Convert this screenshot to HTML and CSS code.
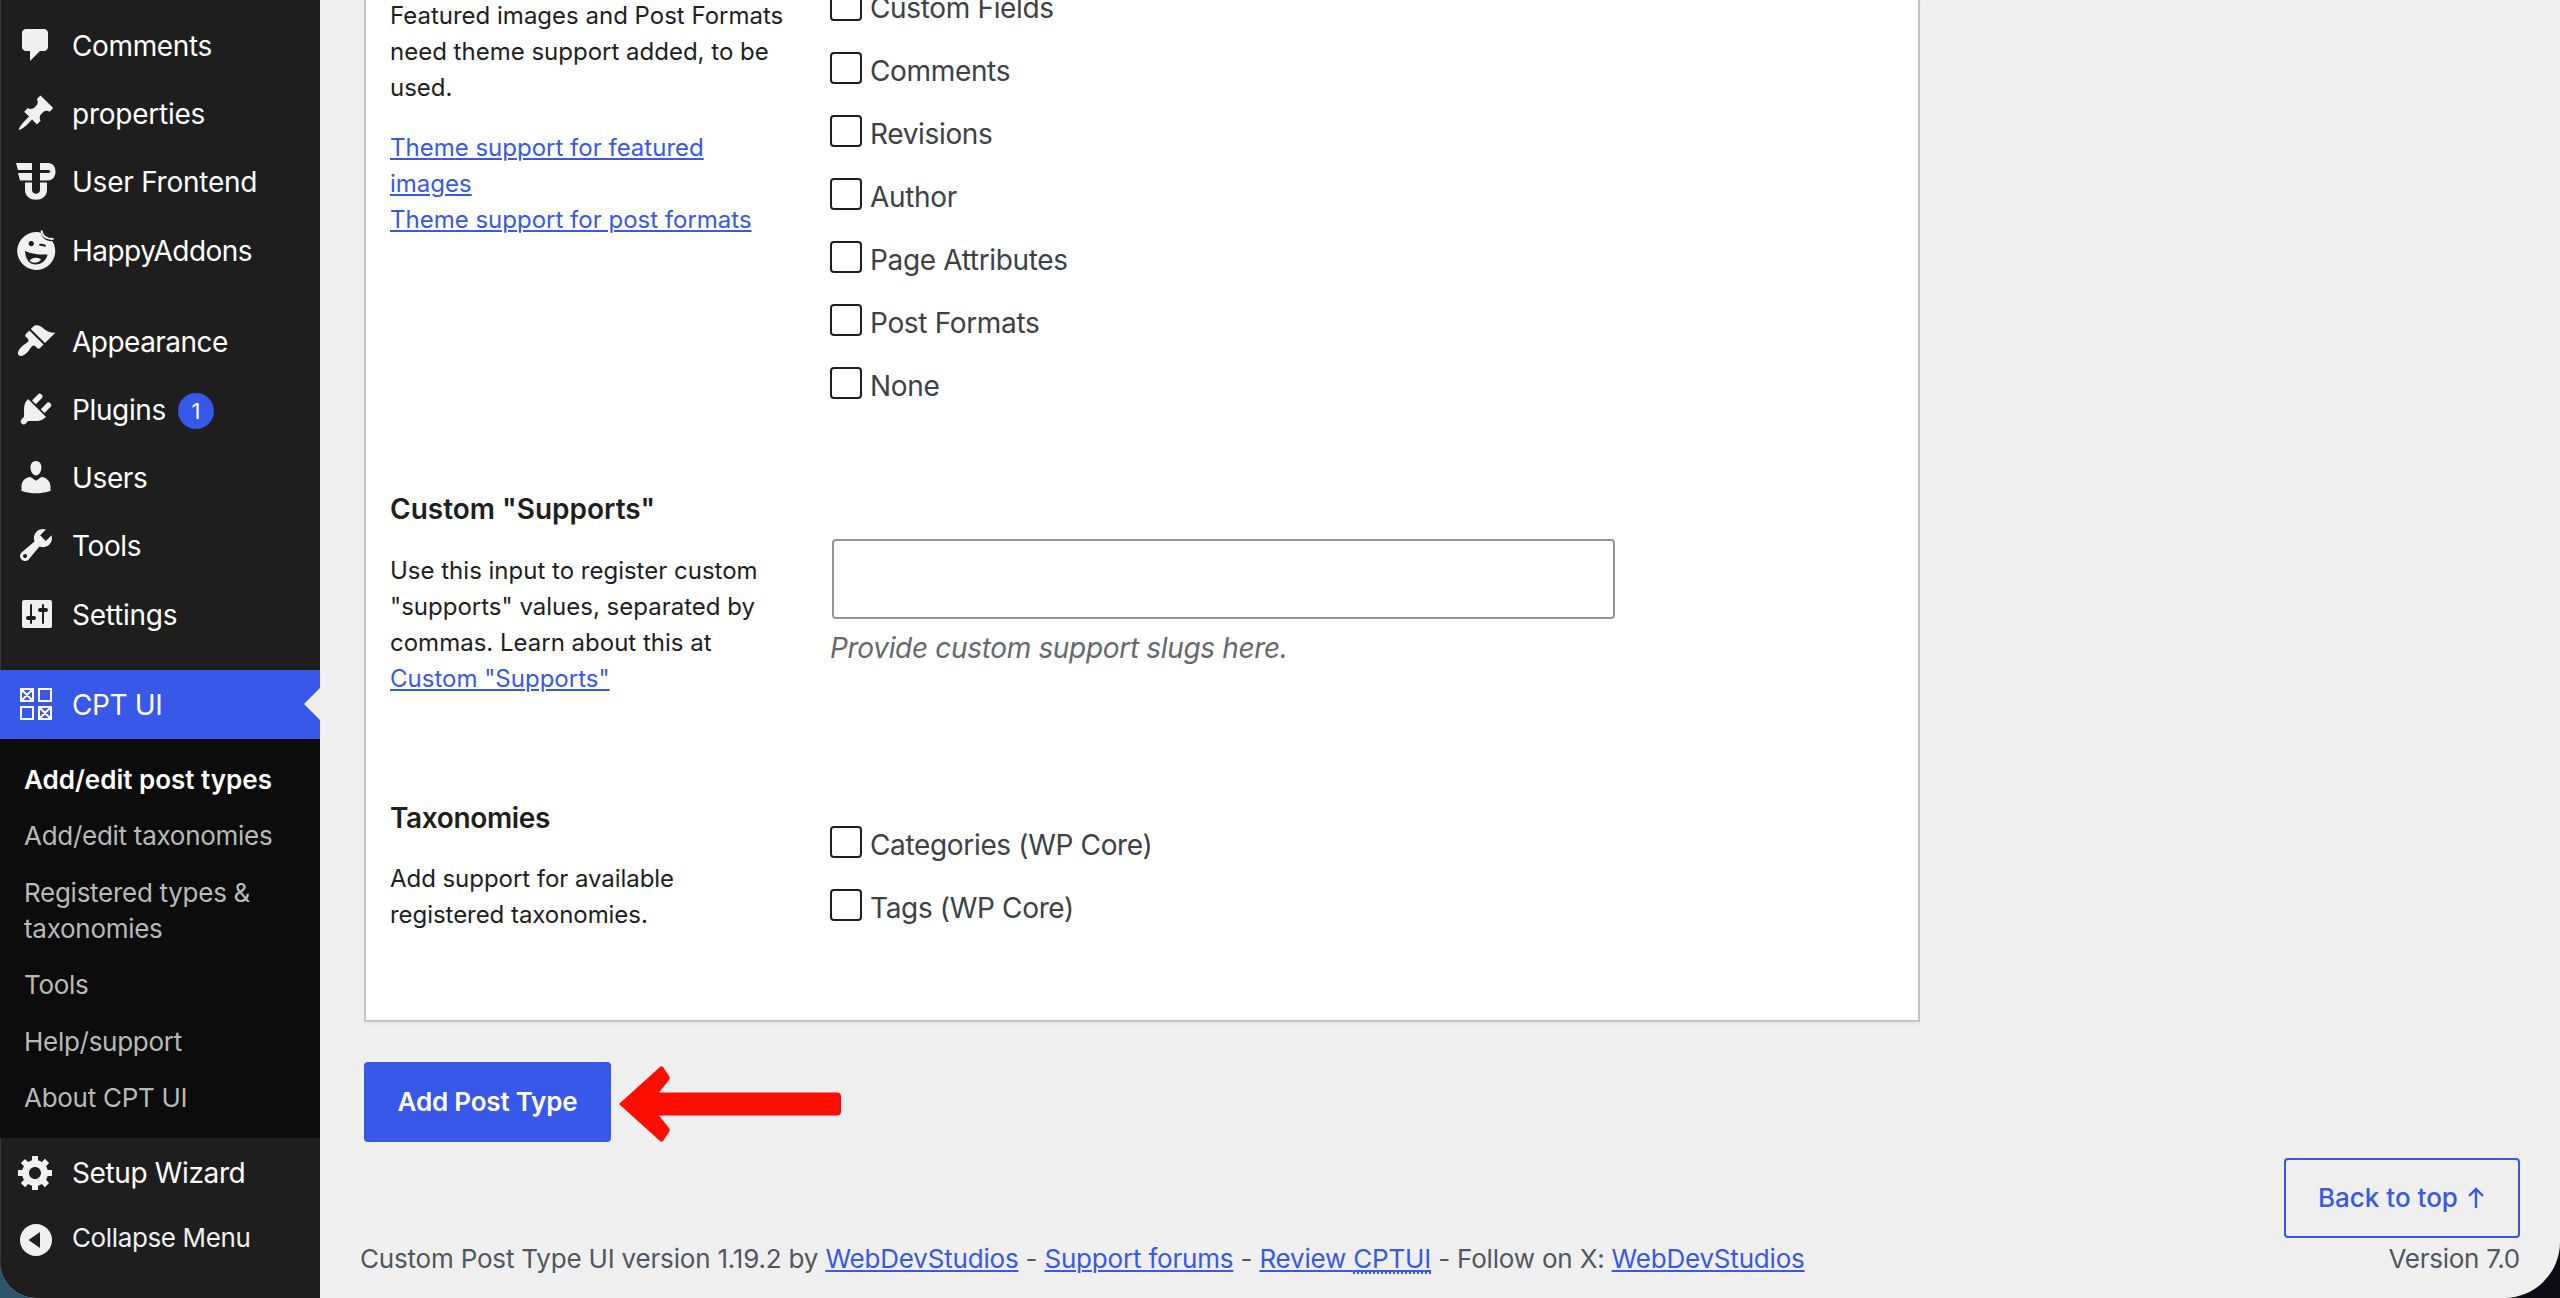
FILE: index.html
```
<!DOCTYPE html>
<html lang="en">
<head>
<meta charset="utf-8">
<title>Add/Edit Post Types</title>
<link rel="stylesheet" href="styles.css">
</head>
<body>
<div class="window">
  <nav class="sidebar">
    <ul class="menu menu-top">
      <li class="item"><svg class="icon" viewBox="0 0 20 20"><path d="M5 2h9c1.1 0 2 .9 2 2v7c0 1.1-.9 2-2 2h-2l-5 5v-5H5c-1.1 0-2-.9-2-2V4c0-1.1.9-2 2-2z"/></svg><span>Comments</span></li>
      <li class="item"><svg class="icon" viewBox="0 0 20 20"><path d="M10.44 3.02l1.82-1.82 6.36 6.35-1.83 1.82c-1.05-.68-2.48-.57-3.41.36l-.75.75c-.92.93-1.04 2.35-.35 3.41l-1.83 1.82-2.41-2.41-2.8 2.79c-.42.42-3.38 2.71-3.8 2.29s1.86-3.39 2.28-3.81l2.79-2.79L4.1 9.36l1.83-1.82c1.05.69 2.48.57 3.4-.36l.75-.75c.93-.92 1.05-2.35.36-3.41z"/></svg><span class="loose">properties</span></li>
      <li class="item"><svg class="icon" viewBox="0 0 40 40"><path d="M0 2h16v7H2zM2 12h14v7.500H4zM24 2h8c5 0 7.500 4 7.500 8.500S37 19.500 32 19.500h-8V12h8.500c2.500 0 2.500-3 0-3H24zM9 21.500h7v7.500c0 5 8 5 8 0v-7.500h7V29c0 13-22 13-22 0z"/></svg><span class="loose">User Frontend</span></li>
      <li class="item"><svg class="icon" viewBox="0 0 40 40"><path fill-rule="evenodd" d="M20 2c2 0 3.500.2 5 .7.500 5 5.500 9 11.500 8.500a19 19 0 1 1-16.500-9.200zM15.200 11a2.600 2.600 0 1 0 .1 0zM23.500 13.800l-.4 1.800 6.600 1.200.3-1.600c-2-1.400-4.500-1.800-6.500-1.400zM9 21c.5 8 4 13.500 10.500 13.500S30.500 30 31.500 24.500C24 25 16 24 9 21z"/><path d="M13.500 30.500c2-3 8-4 11.500-1-1.500 3.500-8.500 4.500-11.500 1z"/><path class="hair" d="M25.500.5c.5 5 4 8.500 12 8.500"/></svg><span class="tight">HappyAddons</span></li>
    </ul>
    <ul class="menu menu-mid">
      <li class="item"><svg class="icon" viewBox="0 0 20 20"><path d="M14.48 11.06L7.41 3.99l1.5-1.5c.5-.56 2.3-.47 3.51.32 1.21.8 1.43 1.28 2.91 2.1 1.18.64 2.45 1.26 4.45.85zm-.71.71L6.7 4.7 4.93 6.47c-.39.39-.39 1.02 0 1.41l1.06 1.06c.39.39.39 1.03 0 1.42-.6.6-1.43 1.11-2.21 1.69-.35.26-.7.53-1.01.84C1.43 14.23.4 16.08 1.4 17.07c.99 1 2.84-.03 4.18-1.36.31-.31.58-.66.85-1.02.57-.78 1.08-1.61 1.69-2.21.39-.39 1.02-.39 1.41 0l1.06 1.06c.39.39 1.02.39 1.41 0z"/></svg><span class="tight">Appearance</span></li>
      <li class="item"><svg class="icon" viewBox="0 0 20 20"><path d="M13.11 4.36L9.87 7.6 8 5.73l3.24-3.24c.35-.34 1.05-.2 1.56.32.52.51.66 1.21.31 1.55zm-8 1.77l.91-1.12 9.01 9.01-1.19.84c-.71.71-2.63 1.16-3.82 1.16H6.14L4.9 17.26c-.59.59-1.54.59-2.12 0-.59-.58-.59-1.53 0-2.12l1.24-1.24v-3.88c0-1.13.4-3.19 1.09-3.89zm7.26 3.97l3.24-3.24c.34-.35 1.04-.21 1.55.31.52.51.66 1.21.31 1.55l-3.24 3.25z"/></svg><span>Plugins</span><b class="badge">1</b></li>
      <li class="item"><svg class="icon" viewBox="0 0 20 20"><path d="M10 9.250c-2.270 0-2.730-3.440-2.730-3.440C7 4.020 7.820 2 9.970 2c2.160 0 2.980 2.020 2.710 3.810 0 0-.41 3.440-2.680 3.440zm0 2.570L12.720 10c2.390 0 4.520 2.330 4.520 4.530v2.490s-3.650 1.130-7.240 1.130c-3.650 0-7.240-1.130-7.240-1.130v-2.490c0-2.250 1.940-4.480 4.470-4.480z"/></svg><span>Users</span></li>
      <li class="item"><svg class="icon" viewBox="0 0 20 20"><path d="M16.68 9.770c-1.340 1.340-3.300 1.670-4.950.99l-5.410 6.520c-.99.99-2.590.99-3.580 0s-.99-2.590 0-3.570l6.520-5.420c-.68-1.650-.35-3.610.99-4.950 1.280-1.280 3.120-1.620 4.720-1.060l-2.890 2.890 2.820 2.820 2.860-2.870c.53 1.580.18 3.390-1.080 4.650zM3.810 16.210c.4.39 1.040.39 1.430 0 .4-.4.4-1.040 0-1.430-.39-.4-1.030-.4-1.430 0-.39.39-.39 1.030 0 1.430z"/></svg><span>Tools</span></li>
      <li class="item"><svg class="icon" viewBox="0 0 20 20"><path fill-rule="evenodd" d="M4 3h13q1 0 1 1v12q0 1-1 1H4q-1 0-1-1V4q0-1 1-1zM7.500 5q-.5 0-.5.5V11H6a1 1 0 0 0 0 2h1v1.500a.5.5 0 0 0 1 0V13h1a1 1 0 0 0 0-2H8V5.500q0-.5-.5-.5zM13.500 5q-.5 0-.5.5V7h-1a1 1 0 0 0 0 2h1v5.500a.5.5 0 0 0 1 0V9h1a1 1 0 0 0 0-2h-1V5.500q0-.5-.5-.5z"/></svg><span class="loose">Settings</span></li>
    </ul>
    <div class="item current"><svg class="icon grid-icon" viewBox="0 0 40 40"><path d="M5 5h12v12H5zM23 5h12v12H23zM5 23h12v12H5zM23 23h12v12H23zM6 6l10 10M16 6L6 16M24 24l10 10M34 24L24 34"/></svg><span>CPT UI</span></div>
    <ul class="submenu">
      <li class="selected">Add/edit post types</li>
      <li>Add/edit taxonomies</li>
      <li>Registered types &amp; taxonomies</li>
      <li>Tools</li>
      <li>Help/support</li>
      <li>About CPT UI</li>
    </ul>
    <ul class="menu">
      <li class="item"><svg class="icon" viewBox="0 0 20 20"><path d="M18 12h-2.180c-.17.7-.44 1.350-.81 1.930l1.540 1.540-2.100 2.100-1.540-1.540c-.58.36-1.230.63-1.910.79V19H8v-2.180c-.68-.16-1.330-.43-1.910-.79l-1.540 1.540-2.120-2.120 1.540-1.540c-.36-.58-.63-1.230-.79-1.910H1V9.030h2.170c.16-.7.44-1.350.8-1.940L2.430 5.550l2.100-2.100 1.540 1.540c.58-.37 1.240-.64 1.930-.81V2h3v2.180c.68.16 1.330.43 1.910.79l1.540-1.540 2.120 2.120-1.540 1.540c.36.59.64 1.240.8 1.940H18V12zm-8.500 1.500c1.660 0 3-1.340 3-3s-1.340-3-3-3-3 1.340-3 3 1.340 3 3 3z"/></svg><span>Setup Wizard</span></li>
      <li class="item collapse"><svg class="icon" viewBox="0 0 40 40"><path fill-rule="evenodd" d="M20 4a16 16 0 1 1 0 32 16 16 0 0 1 0-32zM24 12v16l-11.500-8z"/></svg><span>Collapse Menu</span></li>
    </ul>
  </nav>

  <main class="content">
    <section class="card">
      <div class="row supports">
        <div class="label">
          <p>Featured images and Post Formats need theme support added, to be used.</p>
          <p><a>Theme support for featured images</a><br><a>Theme support for post formats</a></p>
        </div>
        <div class="field checks">
          <label><i class="box"></i>Custom Fields</label>
          <label><i class="box"></i>Comments</label>
          <label><i class="box"></i>Revisions</label>
          <label><i class="box"></i>Author</label>
          <label><i class="box"></i>Page Attributes</label>
          <label><i class="box"></i>Post Formats</label>
          <label><i class="box"></i>None</label>
        </div>
      </div>
      <div class="row custom">
        <div class="label">
          <h3>Custom "Supports"</h3>
          <p>Use this input to register custom "supports" values, separated by commas. Learn about this at <a>Custom "Supports"</a></p>
        </div>
        <div class="field">
          <input class="text-input" type="text">
          <p class="description">Provide custom support slugs here.</p>
        </div>
      </div>
      <div class="row taxonomies">
        <div class="label">
          <h3 class="narrow">Taxonomies</h3>
          <p>Add support for available registered taxonomies.</p>
        </div>
        <div class="field checks">
          <label><i class="box"></i>Categories (WP Core)</label>
          <label><i class="box"></i>Tags (WP Core)</label>
        </div>
      </div>
    </section>

    <div class="submit">
      <button class="primary">Add Post Type</button>
      <svg class="arrow" viewBox="0 0 224 80"><path d="M1 40L42 3q1.500-1.500 3 0L51 12q1.500 2 0 4L41 28.500H219q4 0 4 4v15q0 4-4 4H41L51 64q1.500 2 0 4l-6 9q-1.500 1.500-3 0z"/></svg>
    </div>
    <button class="secondary">Back to top <svg class="up" viewBox="0 0 18 22"><path d="M9 21V2.500M2 9l7-7 7 7"/></svg></button>
    <footer class="footer">
      <p>Custom Post Type UI version 1.19.2 by <a>WebDevStudios</a> - <a>Support forums</a> - <a>Review <abbr>CPTUI</abbr></a> - Follow on X: <a>WebDevStudios</a></p>
      <p class="version">Version 7.0</p>
    </footer>
  </main>
</div>
</body>
</html>
```
FILE: styles.css
```
* { box-sizing: border-box; margin: 0; padding: 0; }

body {
  height: 1298px;
  overflow: hidden;
  background: linear-gradient(90deg, #2c566b 0 200px, #0b0c14 200px);
  font-family: Inter, "Liberation Sans", sans-serif;
  font-size: 28px;
  color: #1e1e1e;
}

.window {
  display: flex;
  height: 1298px;
  overflow: hidden;
  border-radius: 0 0 56px 36px;
  background: #efefef;
}

ul { list-style: none; }

/* Sidebar */
.sidebar {
  flex: 0 0 320px;
  background: #1e1e1e;
  box-shadow: inset 1px 0 #38383a;
}
.menu-top { padding-top: 11px; }
.menu-mid { padding: 23px 0 22px; }
.item {
  display: flex;
  align-items: center;
  height: 68.2px;
  padding-left: 16px;
  color: #fff;
  letter-spacing: -0.37px;
  line-height: 66px;
}
.item span { padding-top: 2px; }
.item .loose { letter-spacing: -0.24px; }
.item .tight { letter-spacing: -0.52px; }
.icon {
  flex: none;
  width: 40px;
  height: 40px;
  margin-right: 16px;
  fill: #f0f0f1;
}
.hair { fill: none; stroke: #f0f0f1; stroke-width: 2; }
.badge {
  width: 36px;
  height: 36px;
  margin: 3px 0 0 12px;
  border-radius: 50%;
  background: #3858e9;
  font-size: 22px;
  font-weight: 400;
  line-height: 36px;
  text-align: center;
  letter-spacing: 0;
}
.current {
  height: 69px;
  background: #3858e9;
  position: relative;
}
.current::after {
  content: "";
  position: absolute;
  right: 0;
  top: 18px;
  border: 16px solid transparent;
  border-left: 0;
  border-right-color: #efefef;
}
.grid-icon { fill: none; stroke: #fff; stroke-width: 2; }
.submenu {
  height: 399px;
  padding: 13px 0;
  background: #0c0c0c;
}
.submenu li {
  padding: 10px 24px;
  color: #b9b9b9;
  font-size: 26px;
  line-height: 36.4px;
  letter-spacing: -0.28px;
}
.submenu .selected { color: #fff; font-weight: 600; letter-spacing: 0; }
.collapse { height: 68px; font-size: 26px; line-height: 62px; color: #f0f0f1; }
.collapse span { margin-top: -5px; }

/* Content */
.content {
  flex: 1;
  display: flex;
  flex-direction: column;
  align-items: flex-start;
  padding: 0 40px 0 44px;
}
.card {
  width: 1556px;
  height: 1022px;
  background: #fff;
  border: 2px solid #c3c4c7;
  border-top: 0;
  box-shadow: 0 2px 2px rgba(0, 0, 0, .04);
}
.row {
  display: grid;
  grid-template-columns: 400px 1fr;
  column-gap: 40px;
  padding-left: 24px;
}
.supports { height: 491px; }
.custom { height: 309px; }
.label { font-size: 24px; line-height: 36px; letter-spacing: 0; }
.supports .label { margin-top: -2px; }
.label p + p { margin-top: 24px; }
h3 { margin-bottom: 26px; font-size: 28px; font-weight: 600; line-height: 36px; }
.custom .label p { max-width: 380px; }
.taxonomies .label p { max-width: 320px; margin-top: -1px; letter-spacing: -0.05px; }
.narrow { letter-spacing: -0.35px; }

a {
  color: #3858e9;
  text-decoration: underline;
  text-decoration-thickness: 2px;
  text-underline-offset: 2px;
}

.checks label {
  display: flex;
  height: 63px;
  color: #3d4146;
  line-height: 38px;
  letter-spacing: -0.34px;
}
.supports .checks { margin-top: -11px; }
.taxonomies .checks { margin-top: 26px; }
.box {
  width: 32px;
  height: 32px;
  margin-right: 8px;
  border: 2px solid #1e1e1e;
  border-radius: 4px;
  background: #fff;
}
.text-input {
  display: block;
  width: 783px;
  height: 80px;
  margin: 48px 0 8px 2px;
  border: 2px solid #949494;
  border-radius: 4px;
  background: #fff;
}
.description {
  color: #646970;
  font-style: italic;
  line-height: 42px;
  letter-spacing: -0.33px;
}

/* Actions */
.submit { display: flex; margin-top: 40px; }
.primary, .secondary {
  height: 80px;
  border: 0;
  border-radius: 4px;
  font: 500 26px/80px Inter, "Liberation Sans", sans-serif;
}
.primary {
  width: 247px;
  background: #3858e9;
  color: #fff;
  font-weight: 600;
  letter-spacing: -0.2px;
}
.arrow { width: 224px; height: 80px; margin: 2px 0 -2px 7px; fill: #ff0d00; }
.secondary {
  display: flex;
  align-items: center;
  align-self: flex-end;
  width: 236px;
  margin-top: 16px;
  padding-left: 32px;
  border: 2px solid #3858e9;
  background: none;
  color: #3858e9;
  line-height: 76px;
}
.up {
  width: 18px;
  height: 22px;
  margin: 0 0 0 9px;
  fill: none;
  stroke: #3858e9;
  stroke-width: 2.4;
}
.footer {
  align-self: stretch;
  display: flex;
  justify-content: space-between;
  margin: 3px 0 0 -4px;
  color: #50575e;
  font-size: 26px;
  line-height: 36px;
  letter-spacing: -0.19px;
}
abbr { text-decoration: underline dotted 2px; text-underline-offset: 4px; }
.version { letter-spacing: -0.28px; }
```
